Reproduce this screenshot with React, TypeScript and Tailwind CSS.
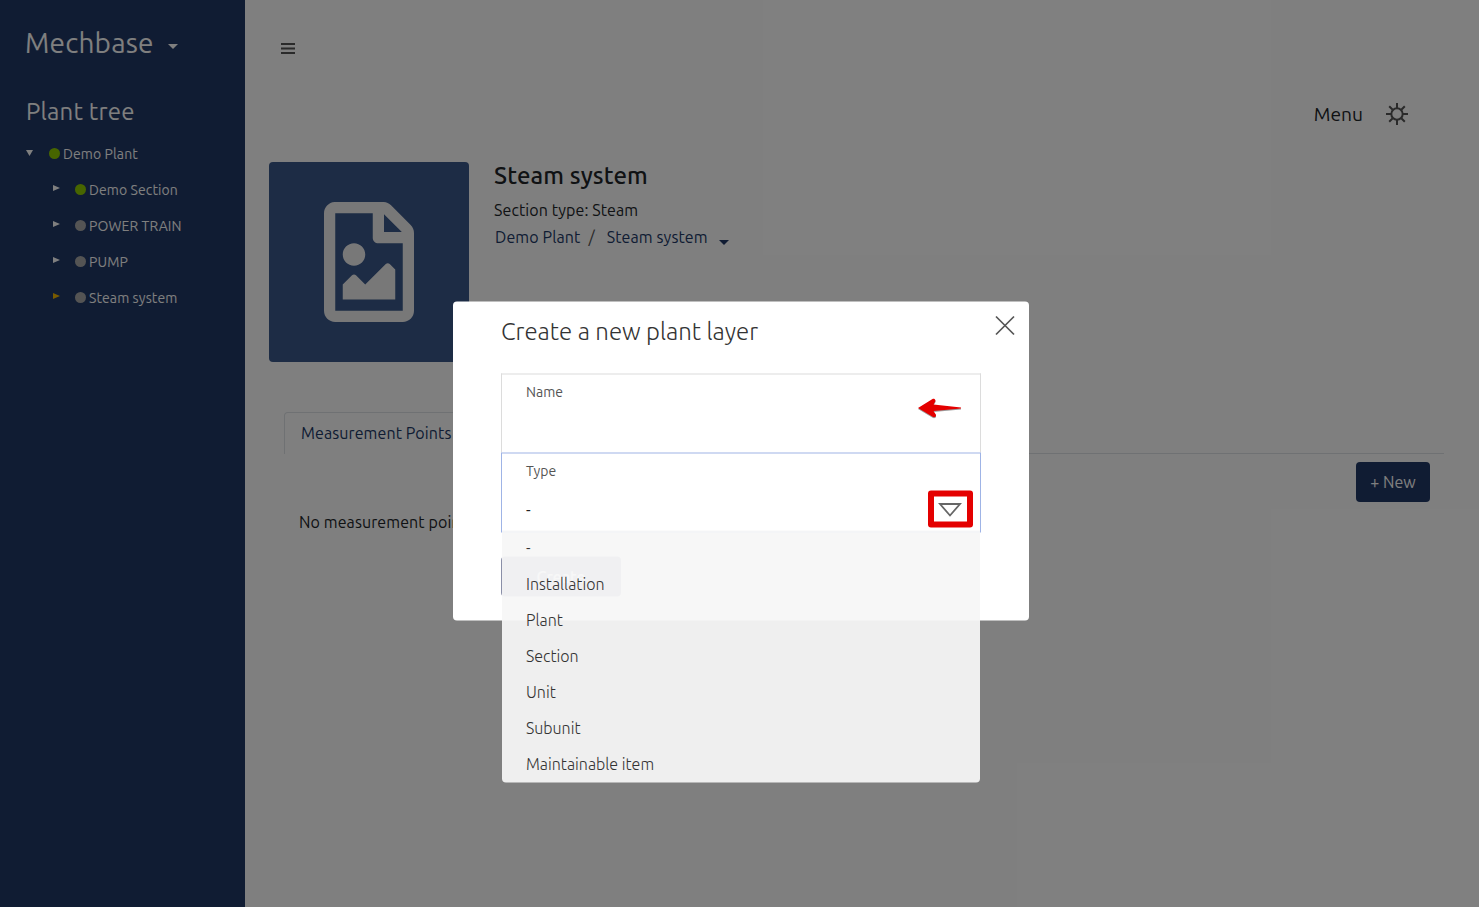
import React from "react";
import { FaRegFileImage } from "react-icons/fa";

type Node = { label: string; dot: string; arrow: string };

const sections: Node[] = [
  { label: "Demo Section", dot: "bg-[#8ecb00]", arrow: "fill-white" },
  { label: "POWER TRAIN", dot: "bg-[#a8a8a8]", arrow: "fill-white" },
  { label: "PUMP", dot: "bg-[#a8a8a8]", arrow: "fill-white" },
  { label: "Steam system", dot: "bg-[#a8a8a8]", arrow: "fill-[#f0b400]" },
];

const options = ["-", "Installation", "Plant", "Section", "Unit", "Subunit", "Maintainable item"];

function Caret({ className }: { className: string }) {
  return (
    <svg viewBox="0 0 10 5" className={className}>
      <path d="M0 0h10L5 5z" />
    </svg>
  );
}

function Sidebar() {
  return (
    <aside className="h-full w-[245px] shrink-0 bg-[#203866] text-white">
      <div className="flex h-[86px] items-center pl-[25px]">
        <span className="text-[28px] leading-9 tracking-[0.2px]">Mechbase</span>
        <Caret className="mt-[6px] ml-[14px] h-[5px] w-[10px] fill-white" />
      </div>
      <h2 className="mt-[10px] pl-[26px] text-[24px] leading-8 tracking-[0.2px]">Plant tree</h2>
      <div className="mt-[8px] flex h-9 items-center pl-[26px] text-[14px]">
        <svg viewBox="0 0 7 6" className="mb-[3px] h-[6px] w-[7px] fill-white">
          <path d="M0 0h7L3.500 6z" />
        </svg>
        <span className="mb-px ml-4 size-[11px] rounded-full bg-[#8ecb00]" />
        <span className="ml-[3px] tracking-[0.1px]">Demo Plant</span>
      </div>
      {sections.map((s) => (
        <div key={s.label} className="flex h-9 items-center pl-[53px] text-[14px]">
          <svg viewBox="0 0 7 6" className={`mb-[4px] h-[6px] w-[7px] ${s.arrow}`}>
            <path d="M0 0L7 3L0 6z" />
          </svg>
          <span className={`mb-px ml-[15px] size-[11px] rounded-full ${s.dot}`} />
          <span className="ml-[3px] tracking-[0.1px]">{s.label}</span>
        </div>
      ))}
    </aside>
  );
}

function Main() {
  return (
    <main className="flex h-full flex-1 flex-col text-[#212529]">
      <div className="flex h-[97px] items-center pl-[36px]">
        <svg viewBox="0 0 14 12" className="h-3 w-[14px] fill-[#555]">
          <path d="M0 0h14v2H0zM0 4.500h14v2H0zM0 9h14v2H0z" />
        </svg>
      </div>
      <div className="flex h-[34px] items-center justify-end pr-[71px]">
        <span className="text-[19.200px]">Menu</span>
        <svg viewBox="0 0 22 22" className="ml-[23px] size-[22px] fill-none stroke-[#555] stroke-2">
          <circle cx="11" cy="11" r="5.700" />
          <path d="M11 0v5M11 17v5M0 11h5M17 11h5M3.200 3.200l3.500 3.500M15.300 15.300l3.500 3.500M3.200 18.800l3.500-3.500M15.300 6.700l3.500-3.500" />
        </svg>
      </div>
      <div className="mt-[31px] flex pl-6">
        <div className="flex size-[200px] items-center justify-center rounded bg-[#3a588a]">
          <FaRegFileImage className="size-[120px] text-[#f0f0f0]" />
        </div>
        <div className="ml-[25px]">
          <h1 className="mt-[-2px] text-[24px] leading-8 font-medium tracking-[0.1px]">Steam system</h1>
          <p className="mt-[6px] text-[16px] leading-6 tracking-[0.1px]">Section type: Steam</p>
          <div className="mt-[3px] flex items-center pl-px text-[16px] leading-6 tracking-[0.1px] text-[#203866]">
            <span>Demo Plant</span>
            <span className="ml-2 text-[17px] text-[#555]">/</span>
            <span className="ml-[12px]">Steam system</span>
            <Caret className="mt-[11px] ml-[11px] h-[5px] w-[10px] fill-[#203866]" />
          </div>
        </div>
      </div>
      <div className="mt-[50px] mr-[35px] ml-[39px] flex h-[42px] border-b border-[#dee2e6]">
        <div className="h-[42px] w-[185px] rounded-t border border-b-0 border-[#dee2e6] bg-white px-4 pt-[8px] text-[16px] leading-6 tracking-[0.1px] whitespace-nowrap text-[#203866]">
          Measurement Points
        </div>
      </div>
      <div className="mr-[49px] ml-[54px] flex justify-between">
        <p className="mt-14 text-[16px] leading-6 tracking-[0.1px]">No measurement points</p>
        <button className="mt-2 h-10 w-[74px] rounded bg-[#203866] text-[16px] text-white">+ New</button>
      </div>
    </main>
  );
}

function TypeOptions() {
  return (
    <ul className="absolute top-[229px] left-[49px] h-[252px] w-[478px] rounded-b bg-[#f7f7f7]/94 font-['Ubuntu_Light','Ubuntu','Noto_Sans',sans-serif] text-[16px] font-light text-[#333]">
      {options.map((o) => (
        <li key={o} className="flex h-9 items-center pb-0.5 pl-6">
          {o}
        </li>
      ))}
    </ul>
  );
}

function Dialog() {
  return (
    <div className="relative h-[319px] w-[576px] -translate-y-[0.5px] rounded bg-white">
      <div className="flex justify-between pl-12">
        <h2 className="mt-[14px] font-['Ubuntu_Light','Ubuntu','Noto_Sans',sans-serif] text-[24px] leading-8 font-light text-[#333]">
          Create a new plant layer
        </h2>
        <svg viewBox="0 0 20 20" className="mt-[14px] mr-[14px] size-5 stroke-[#555] stroke-[1.700]">
          <path d="M1 1l18 18M19 1L1 19" />
        </svg>
      </div>
      <div className="mx-12 mt-[26px] h-[79px] border border-b-0 border-[#dcdcdc]">
        <div className="flex h-full justify-between pr-[18px] pl-6">
          <span className="mt-[7px] text-[14px] leading-5 text-[#555]">Name</span>
          <svg viewBox="0 0 44 20" className="mt-[23px] h-5 w-11 fill-[#e40000] drop-shadow-[0_1px_0_rgba(90,90,90,0.6)]">
            <path d="M0 10.500L14.500 1.500c2-1 4 1.500 2.500 3l-1.500 2.500L43 10v1L15.500 13.500l2 3c1.500 2-0.500 4-2.500 3z" />
          </svg>
        </div>
      </div>
      <div className="mx-12 h-[80px] border border-[#9fb4e6] pl-6">
        <div className="mt-[7px] text-[14px] leading-5 text-[#555]">Type</div>
        <div className="flex items-start justify-between pr-[7px]">
          <span className="mt-[17px] text-[16px] leading-6 text-[#222]">-</span>
          <span className="mt-[10px] flex h-[37px] w-[45px] items-center justify-center rounded-[3px] border-[6px] border-[#e40000]">
            <svg viewBox="0 0 24 15" className="mt-[2px] mr-[2px] h-[15px] w-6 shrink-0 fill-none stroke-[#666] stroke-[1.800]">
              <path d="M2 1.500h20L12 13z" />
            </svg>
          </span>
        </div>
      </div>
      <div className="mx-12 mt-[24px] flex h-10 w-[120px] items-center justify-center rounded bg-[#8a8fa8] text-[16px] font-medium text-white">
        Create
      </div>
      <TypeOptions />
    </div>
  );
}

export default function App() {
  return (
    <div className="relative flex h-[907px] w-[1479px] overflow-hidden bg-white font-['Ubuntu','Noto_Sans',sans-serif]">
      <Sidebar />
      <Main />
      <div className="absolute inset-0 flex items-start bg-black/50 pt-[302px] pl-[453px]">
        <Dialog />
      </div>
    </div>
  );
}
